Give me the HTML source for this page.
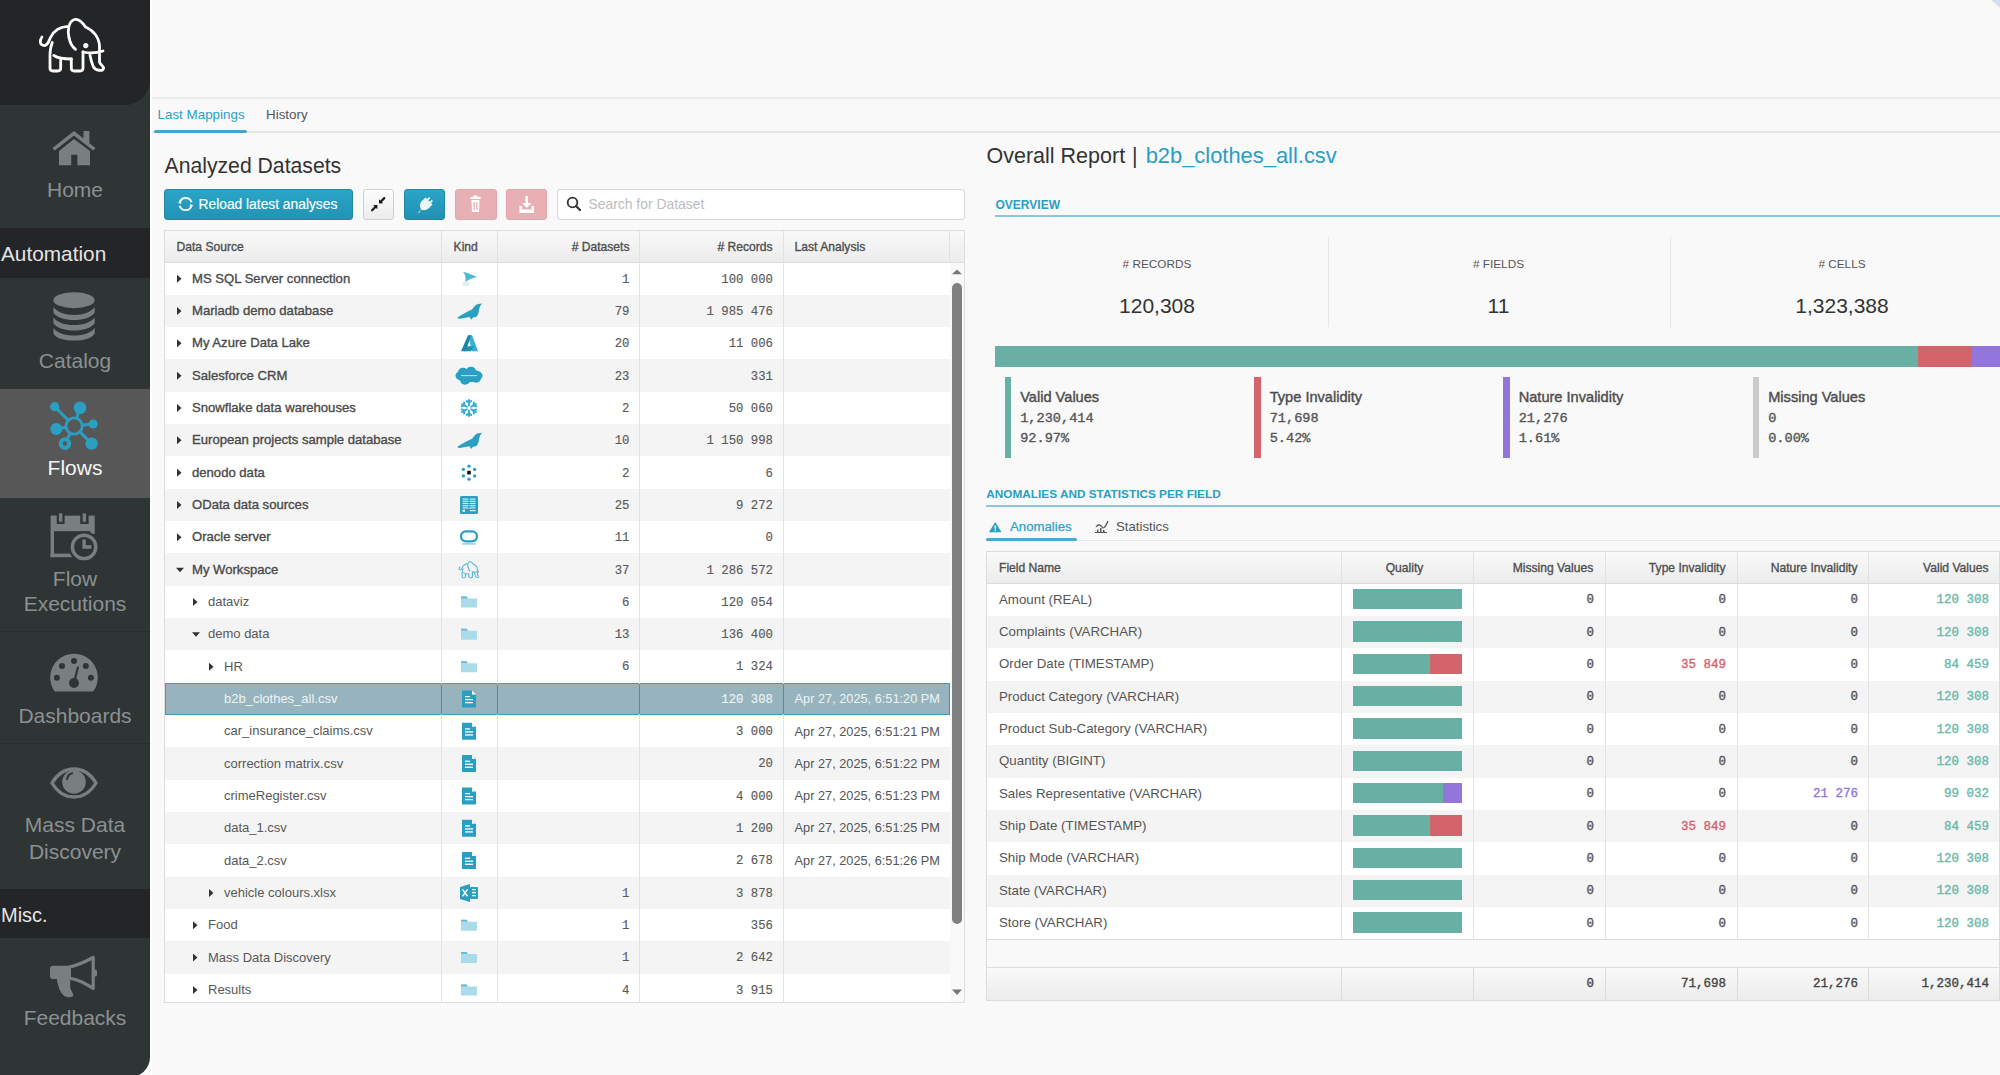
<!DOCTYPE html>
<html><head><meta charset="utf-8"><style>
*{box-sizing:border-box;margin:0;padding:0}
html,body{width:2000px;height:1075px;overflow:hidden;background:#f9f9f9;font-family:"Liberation Sans",sans-serif;color:#444}
.t{position:absolute;white-space:nowrap}
.m{font-family:"Liberation Mono",monospace;-webkit-text-stroke:0.35px currentColor}
svg{position:absolute;overflow:visible}
.box{position:absolute}
</style></head><body>
<div class="box" style="left:0.00px;top:0.00px;width:150.00px;height:1077.00px;background:#2f3535;border-bottom-right-radius:20px"></div>
<div class="box" style="left:0.00px;top:0.00px;width:150.00px;height:104.50px;background:#232526;border-bottom-right-radius:25px"></div>
<svg style="left:0px;top:0px" width="150" height="105" viewBox="0 0 150 105"><g fill="none" stroke="#fff" stroke-width="2.8" stroke-linecap="round" stroke-linejoin="round">
<path d="M42,37 C39,41 40,45.5 44.5,45.6 C47.5,45.5 48.5,42 50.5,37.5 C54,30 61,26.5 68.5,26.3"/>
<path d="M69,38 C67,30 69,21 74.5,19.5 C79,18.5 82.5,22.5 85.5,27 C93,30 99,37 99.5,46 L99.5,62 C100,65 104,66 103.5,68.5 C102.5,71.5 95,71 93,66 C91.5,62 90.5,58 90,55"/>
<path d="M69.2,38 C70,43 72.5,47 75.5,49.3"/>
<path d="M83,52 C90,53.5 97,53 103,51"/>
<path d="M83,52 L83,68.3 Q83,71 80,71 L74.3,71 Q71.3,71 71.3,68.3 L71.3,59"/>
<path d="M53.8,55.5 C57,57.5 62,59 71.3,59"/>
<path d="M52.3,42.5 C50.5,47 49.8,52 50,58 L50,68.3 Q50,71 53,71 L57.7,71 Q60.7,71 60.7,68.3 L60.7,59.5"/>
</g><circle cx="85.8" cy="45.6" r="2.6" fill="#fff"/></svg>
<svg style="left:0px;top:0px" width="150" height="200" viewBox="0 0 150 200"><g fill="#797e7f">
<path d="M74,131 L52.5,148 L54.8,150.5 L74,135.5 L93.2,150.5 L95.5,148 L89.4,143.2 L89.4,131 L83.5,131 L83.5,138.6 Z"/>
<path d="M74,139 L59,151 L59,165.3 L71.2,165.3 L71.2,154.8 L77.4,154.8 L77.4,165.3 L90,165.3 L90,151 Z"/>
</g></svg>
<div class="t" style="left:0.00px;width:150px;text-align:center;top:175.22px;font-size:21px;line-height:29px;color:#8b9091">Home</div>
<div class="box" style="left:0.00px;top:228.20px;width:150.00px;height:49.60px;background:#232526"></div>
<div class="t" style="left:1.00px;top:239.09px;font-size:20.8px;line-height:29px;color:#e4e4e4">Automation</div>
<svg style="left:0px;top:0px" width="150" height="400" viewBox="0 0 150 400"><g fill="#797e7f">
<ellipse cx="74" cy="300.2" rx="20.6" ry="8"/>
<path d="M53.4,307 C57,312 65,315 74,315 C83,315 91,312 94.7,307 L94.7,312.5 C91,318 83,320 74,320 C65,320 57,318 53.4,312.5 Z"/>
<path d="M53.4,317.5 C57,322.5 65,325 74,325 C83,325 91,322.5 94.7,317.5 L94.7,323 C91,328.5 83,330.5 74,330.5 C65,330.5 57,328.5 53.4,323 Z"/>
<path d="M53.4,328 C57,333 65,335.5 74,335.5 C83,335.5 91,333 94.7,328 L94.7,333.5 C91,339 83,340.5 74,340.5 C65,340.5 57,339 53.4,333.5 Z"/>
</g></svg>
<div class="t" style="left:0.00px;width:150px;text-align:center;top:345.52px;font-size:21px;line-height:29px;color:#8b9091">Catalog</div>
<div class="box" style="left:0.00px;top:388.50px;width:150.00px;height:109.30px;background:#575757"></div>
<svg style="left:0px;top:0px" width="150" height="500" viewBox="0 0 150 500"><g fill="#2a9fc1" stroke="#2a9fc1">
<g stroke-width="3"><line x1="54.7" y1="406.7" x2="74.1" y2="426"/><line x1="80" y1="407.8" x2="74.1" y2="426"/><line x1="56.3" y1="429" x2="74.1" y2="426"/><line x1="93.2" y1="424" x2="74.1" y2="426"/><line x1="65" y1="443.6" x2="74.1" y2="426"/><line x1="91.6" y1="443.6" x2="74.1" y2="426"/></g>
<circle cx="74.1" cy="426" r="8.1" fill="#575757" stroke-width="2.9"/>
<circle cx="54.7" cy="406.7" r="4.6" stroke="none"/>
<circle cx="80" cy="407.8" r="6.3" stroke="none"/>
<circle cx="56.3" cy="429" r="6" stroke="none"/>
<circle cx="93.2" cy="424" r="4.6" stroke="none"/>
<circle cx="65" cy="443.6" r="4.3" fill="#575757" stroke-width="4"/>
<circle cx="91.6" cy="443.6" r="6.15" stroke="none"/>
</g></svg>
<div class="t" style="left:0.00px;width:150px;text-align:center;top:453.22px;font-size:21px;line-height:29px;color:#f4f4f4">Flows</div>
<svg style="left:0px;top:0px" width="150" height="600" viewBox="0 0 150 600"><g fill="#797e7f">
<rect x="50.6" y="515.6" width="44.1" height="15.6"/>
<rect x="50.6" y="530" width="3.4" height="27.2"/>
<rect x="50.6" y="553.6" width="22" height="3.6"/>
<rect x="90.5" y="530" width="4.2" height="4"/>
</g>
<g fill="#2f3536"><rect x="56.7" y="515" width="7.9" height="9"/><rect x="80.2" y="515" width="8.4" height="9"/><circle cx="84.1" cy="546.9" r="15.6"/></g>
<g fill="#797e7f"><rect x="59" y="513.4" width="3.3" height="8.4"/><rect x="82.7" y="513.4" width="3.3" height="8.4"/></g>
<circle cx="84.1" cy="546.9" r="11.7" fill="none" stroke="#797e7f" stroke-width="3.4"/>
<path d="M84.1,539.6 L84.1,547 L91.4,547" fill="none" stroke="#797e7f" stroke-width="3.4"/></svg>
<div class="t" style="left:0.00px;width:150px;text-align:center;top:564.02px;font-size:21px;line-height:29px;color:#8b9091">Flow</div>
<div class="t" style="left:0.00px;width:150px;text-align:center;top:588.52px;font-size:21px;line-height:29px;color:#8b9091">Executions</div>
<div class="box" style="left:0.00px;top:631.00px;width:150.00px;height:1.00px;background:#282c2d"></div>
<svg style="left:0px;top:0px" width="150" height="700" viewBox="0 0 150 700"><path d="M54.8,691.6 A23.8,23.8 0 1 1 93.2,691.6 Z" fill="#797e7f"/>
<g fill="#2f3536"><circle cx="74" cy="660.9" r="3"/><circle cx="62" cy="666" r="3"/><circle cx="85.8" cy="666" r="3"/><circle cx="56.9" cy="677.8" r="3"/><circle cx="90.9" cy="677.8" r="3"/><circle cx="74" cy="683" r="5"/></g>
<line x1="74" y1="683" x2="77.9" y2="667.5" stroke="#2f3536" stroke-width="2.2" stroke-linecap="round"/></svg>
<div class="t" style="left:0.00px;width:150px;text-align:center;top:700.92px;font-size:21px;line-height:29px;color:#8b9091">Dashboards</div>
<div class="box" style="left:0.00px;top:742.50px;width:150.00px;height:1.00px;background:#282c2d"></div>
<svg style="left:0px;top:0px" width="150" height="820" viewBox="0 0 150 820"><path d="M52,783 C58,773 65,769 74,769 C83,769 90,773 96,783 C90,793 83,797 74,797 C65,797 58,793 52,783 Z" fill="none" stroke="#797e7f" stroke-width="3.3"/>
<circle cx="74" cy="782" r="11.8" fill="#797e7f"/>
<path d="M67,780 C67,776 69,774 73,773" fill="none" stroke="#2f3536" stroke-width="2"/></svg>
<div class="t" style="left:0.00px;width:150px;text-align:center;top:809.72px;font-size:21px;line-height:29px;color:#8b9091">Mass Data</div>
<div class="t" style="left:0.00px;width:150px;text-align:center;top:837.22px;font-size:21px;line-height:29px;color:#8b9091">Discovery</div>
<div class="box" style="left:0.00px;top:889.00px;width:150.00px;height:48.60px;background:#232526"></div>
<div class="t" style="left:1.00px;top:901.07px;font-size:20px;line-height:28px;color:#e4e4e4">Misc.</div>
<svg style="left:0px;top:0px" width="150" height="1010" viewBox="0 0 150 1010"><g fill="#797e7f">
<rect x="50" y="965.7" width="21" height="13.3" rx="3"/>
<path d="M56.8,979 L70.2,979 L70.2,988 L73.5,995 C73,997 70,997.5 67,997 C62,996 58.5,990 56.8,979 Z"/>
<rect x="93.5" y="969.6" width="3.5" height="7" rx="1.5"/>
</g>
<path d="M68,967.2 C80,965 86,961 93.2,957.5 L93.2,988.5 C86,984 80,980 68,977.8" fill="none" stroke="#797e7f" stroke-width="3.2" stroke-linejoin="round"/></svg>
<div class="t" style="left:0.00px;width:150px;text-align:center;top:1003.42px;font-size:21px;line-height:29px;color:#8b9091">Feedbacks</div>
<div class="box" style="left:1985px;top:-53px;width:66px;height:66px;border-radius:50%;background:#d3deed"></div>
<div class="box" style="left:150.00px;top:0.00px;width:2.00px;height:1075.00px;background:#fff"></div>
<div class="box" style="left:152.00px;top:97.00px;width:1848.00px;height:2.00px;background:#ebebeb"></div>
<div class="box" style="left:152.00px;top:131.00px;width:1848.00px;height:1.50px;background:#e6e6e6"></div>
<div class="box" style="left:154.00px;top:129.80px;width:93.00px;height:3.00px;background:#3fa9c9;border-radius:1.5px"></div>
<div class="t" style="left:157.50px;top:104.66px;font-size:13.4px;line-height:19px;color:#2a9fc1">Last Mappings</div>
<div class="t" style="left:266.00px;top:104.66px;font-size:13.4px;line-height:19px;color:#555">History</div>
<div class="t" style="left:164.50px;top:151.15px;font-size:21.2px;line-height:30px;color:#333">Analyzed Datasets</div>
<div class="box" style="left:164.00px;top:188.50px;width:189.00px;height:31.30px;background:linear-gradient(#2aa5c6,#2293b4);border-radius:3px;border:1px solid #2189a8"></div>
<svg style="left:0px;top:0px" width="400" height="230" viewBox="0 0 400 230"><g fill="none" stroke="#f2fafc" stroke-width="1.9"><path d="M179.6,202.4 A6.3,6.3 0 0 1 191.6,202.3"/><path d="M191.6,205.7 A6.3,6.3 0 0 1 179.6,205.8"/></g>
<path d="M177.6,202.8 L181.6,201.2 L181,204 Z" fill="#f2fafc"/><path d="M193.6,205.3 L189.6,206.9 L190.2,204.1 Z" fill="#f2fafc"/></svg>
<div class="t" style="left:198.50px;top:194.72px;font-size:13.8px;line-height:19px;color:#fff;-webkit-text-stroke:0.15px #fff">Reload latest analyses</div>
<div class="box" style="left:363.00px;top:188.80px;width:31.00px;height:30.80px;background:linear-gradient(#fdfdfd,#ececec);border:1px solid #cfcfcf;border-radius:3px"></div>
<svg style="left:0px;top:0px" width="420" height="230" viewBox="0 0 420 230"><path d="M377.49,204.91 L377.28,209.22 L373.18,205.12 Z" fill="#1a1a1a"/><line x1="375.73" y1="206.67" x2="372.12" y2="210.28" stroke="#1a1a1a" stroke-width="2.2" stroke-linecap="round"/><path d="M378.91,203.49 L383.22,203.28 L379.12,199.18 Z" fill="#1a1a1a"/><line x1="380.67" y1="201.73" x2="384.28" y2="198.12" stroke="#1a1a1a" stroke-width="2.2" stroke-linecap="round"/></svg>
<div class="box" style="left:403.70px;top:188.80px;width:41.50px;height:30.80px;background:linear-gradient(#2aa5c6,#2191b2);border:1px solid #2189a8;border-radius:3px"></div>
<svg style="left:0px;top:0px" width="460" height="230" viewBox="0 0 460 230"><path d="M418,213 L421,209 C419,206 420,202 423,200 L425.5,197.5 L427,199 L429,197 L430.3,198.3 L428.3,200.3 L429.7,201.7 L431.7,199.7 L433,201 L431,203 L432.5,204.5 L430,207 C428,210 424,211 421,209.5 L419,213 Z" fill="#e8f6fa"/></svg>
<div class="box" style="left:455.00px;top:188.80px;width:41.50px;height:30.80px;background:#e8b0b5;border-radius:3px;border:1px solid #e2a7ad"></div>
<svg style="left:0px;top:0px" width="520" height="230" viewBox="0 0 520 230"><g fill="#fff"><rect x="470.5" y="197" width="10" height="2"/><rect x="473.5" y="195.5" width="4" height="2"/>
<path d="M471.5,200 L479.5,200 L479,212 L472,212 Z"/></g><g fill="#e8b0b5"><rect x="473.5" y="202" width="1.3" height="8"/><rect x="476.2" y="202" width="1.3" height="8"/></g></svg>
<div class="box" style="left:506.30px;top:188.80px;width:41.10px;height:30.80px;background:#e8b0b5;border-radius:3px;border:1px solid #e2a7ad"></div>
<svg style="left:0px;top:0px" width="560" height="230" viewBox="0 0 560 230"><g fill="#fff"><rect x="525.5" y="196" width="2.4" height="8"/><path d="M522,203 L531.5,203 L526.7,208 Z"/>
<path d="M519.5,206 L522,206 L522,209.5 L531.5,209.5 L531.5,206 L534,206 L534,213 L519.5,213 Z"/></g></svg>
<div class="box" style="left:557.30px;top:188.50px;width:408.20px;height:31.50px;background:#fff;border:1px solid #d6d6d6;border-radius:3px"></div>
<svg style="left:0px;top:0px" width="600" height="230" viewBox="0 0 600 230"><circle cx="572.5" cy="202.5" r="4.8" fill="none" stroke="#333" stroke-width="1.8"/><line x1="576" y1="206" x2="580" y2="210" stroke="#333" stroke-width="2.2" stroke-linecap="round"/></svg>
<div class="t" style="left:588.50px;top:194.68px;font-size:13.9px;line-height:19px;color:#bdbdbd">Search for Dataset</div>
<div class="box" style="left:164.30px;top:229.50px;width:801.00px;height:773.30px;background:#f9f9f9;border:1px solid #dddddd;overflow:hidden"></div>
<div class="box" style="left:165.30px;top:230.50px;width:799.00px;height:32.00px;background:linear-gradient(#f9f9f9,#ececec);border-bottom:1px solid #dcdcdc"></div>
<div class="box" style="left:165.30px;top:262.50px;width:784.50px;height:32.33px;background:#ffffff"></div>
<div class="t" style="left:192.00px;top:269.76px;font-size:13.1px;line-height:18px;color:#4a4a4a;-webkit-text-stroke:0.35px #4a4a4a;">MS SQL Server connection</div>
<div class="t m" style="right:1370.50px;text-align:right;top:271.53px;font-size:12.3px;line-height:17px;color:#5a5a5a;-webkit-text-stroke:0.15px #5a5a5a">1</div>
<div class="t m" style="right:1227.00px;text-align:right;top:271.53px;font-size:12.3px;line-height:17px;color:#5a5a5a;-webkit-text-stroke:0.15px #5a5a5a">100 000</div>
<div class="box" style="left:165.30px;top:294.83px;width:784.50px;height:32.33px;background:#f4f4f4"></div>
<div class="t" style="left:192.00px;top:302.09px;font-size:13.1px;line-height:18px;color:#4a4a4a;-webkit-text-stroke:0.35px #4a4a4a;">Mariadb demo database</div>
<div class="t m" style="right:1370.50px;text-align:right;top:303.86px;font-size:12.3px;line-height:17px;color:#5a5a5a;-webkit-text-stroke:0.15px #5a5a5a">79</div>
<div class="t m" style="right:1227.00px;text-align:right;top:303.86px;font-size:12.3px;line-height:17px;color:#5a5a5a;-webkit-text-stroke:0.15px #5a5a5a">1 985 476</div>
<div class="box" style="left:165.30px;top:327.16px;width:784.50px;height:32.33px;background:#ffffff"></div>
<div class="t" style="left:192.00px;top:334.42px;font-size:13.1px;line-height:18px;color:#4a4a4a;-webkit-text-stroke:0.35px #4a4a4a;">My Azure Data Lake</div>
<div class="t m" style="right:1370.50px;text-align:right;top:336.19px;font-size:12.3px;line-height:17px;color:#5a5a5a;-webkit-text-stroke:0.15px #5a5a5a">20</div>
<div class="t m" style="right:1227.00px;text-align:right;top:336.19px;font-size:12.3px;line-height:17px;color:#5a5a5a;-webkit-text-stroke:0.15px #5a5a5a">11 006</div>
<div class="box" style="left:165.30px;top:359.49px;width:784.50px;height:32.33px;background:#f4f4f4"></div>
<div class="t" style="left:192.00px;top:366.75px;font-size:13.1px;line-height:18px;color:#4a4a4a;-webkit-text-stroke:0.35px #4a4a4a;">Salesforce CRM</div>
<div class="t m" style="right:1370.50px;text-align:right;top:368.52px;font-size:12.3px;line-height:17px;color:#5a5a5a;-webkit-text-stroke:0.15px #5a5a5a">23</div>
<div class="t m" style="right:1227.00px;text-align:right;top:368.52px;font-size:12.3px;line-height:17px;color:#5a5a5a;-webkit-text-stroke:0.15px #5a5a5a">331</div>
<div class="box" style="left:165.30px;top:391.82px;width:784.50px;height:32.33px;background:#ffffff"></div>
<div class="t" style="left:192.00px;top:399.08px;font-size:13.1px;line-height:18px;color:#4a4a4a;-webkit-text-stroke:0.35px #4a4a4a;">Snowflake data warehouses</div>
<div class="t m" style="right:1370.50px;text-align:right;top:400.85px;font-size:12.3px;line-height:17px;color:#5a5a5a;-webkit-text-stroke:0.15px #5a5a5a">2</div>
<div class="t m" style="right:1227.00px;text-align:right;top:400.85px;font-size:12.3px;line-height:17px;color:#5a5a5a;-webkit-text-stroke:0.15px #5a5a5a">50 060</div>
<div class="box" style="left:165.30px;top:424.15px;width:784.50px;height:32.33px;background:#f4f4f4"></div>
<div class="t" style="left:192.00px;top:431.41px;font-size:13.1px;line-height:18px;color:#4a4a4a;-webkit-text-stroke:0.35px #4a4a4a;">European projects sample database</div>
<div class="t m" style="right:1370.50px;text-align:right;top:433.18px;font-size:12.3px;line-height:17px;color:#5a5a5a;-webkit-text-stroke:0.15px #5a5a5a">10</div>
<div class="t m" style="right:1227.00px;text-align:right;top:433.18px;font-size:12.3px;line-height:17px;color:#5a5a5a;-webkit-text-stroke:0.15px #5a5a5a">1 150 998</div>
<div class="box" style="left:165.30px;top:456.48px;width:784.50px;height:32.33px;background:#ffffff"></div>
<div class="t" style="left:192.00px;top:463.74px;font-size:13.1px;line-height:18px;color:#4a4a4a;-webkit-text-stroke:0.35px #4a4a4a;">denodo data</div>
<div class="t m" style="right:1370.50px;text-align:right;top:465.51px;font-size:12.3px;line-height:17px;color:#5a5a5a;-webkit-text-stroke:0.15px #5a5a5a">2</div>
<div class="t m" style="right:1227.00px;text-align:right;top:465.51px;font-size:12.3px;line-height:17px;color:#5a5a5a;-webkit-text-stroke:0.15px #5a5a5a">6</div>
<div class="box" style="left:165.30px;top:488.81px;width:784.50px;height:32.33px;background:#f4f4f4"></div>
<div class="t" style="left:192.00px;top:496.07px;font-size:13.1px;line-height:18px;color:#4a4a4a;-webkit-text-stroke:0.35px #4a4a4a;">OData data sources</div>
<div class="t m" style="right:1370.50px;text-align:right;top:497.84px;font-size:12.3px;line-height:17px;color:#5a5a5a;-webkit-text-stroke:0.15px #5a5a5a">25</div>
<div class="t m" style="right:1227.00px;text-align:right;top:497.84px;font-size:12.3px;line-height:17px;color:#5a5a5a;-webkit-text-stroke:0.15px #5a5a5a">9 272</div>
<div class="box" style="left:165.30px;top:521.14px;width:784.50px;height:32.33px;background:#ffffff"></div>
<div class="t" style="left:192.00px;top:528.40px;font-size:13.1px;line-height:18px;color:#4a4a4a;-webkit-text-stroke:0.35px #4a4a4a;">Oracle server</div>
<div class="t m" style="right:1370.50px;text-align:right;top:530.17px;font-size:12.3px;line-height:17px;color:#5a5a5a;-webkit-text-stroke:0.15px #5a5a5a">11</div>
<div class="t m" style="right:1227.00px;text-align:right;top:530.17px;font-size:12.3px;line-height:17px;color:#5a5a5a;-webkit-text-stroke:0.15px #5a5a5a">0</div>
<div class="box" style="left:165.30px;top:553.47px;width:784.50px;height:32.33px;background:#f4f4f4"></div>
<div class="t" style="left:192.00px;top:560.73px;font-size:13.1px;line-height:18px;color:#4a4a4a;-webkit-text-stroke:0.35px #4a4a4a;">My Workspace</div>
<div class="t m" style="right:1370.50px;text-align:right;top:562.50px;font-size:12.3px;line-height:17px;color:#5a5a5a;-webkit-text-stroke:0.15px #5a5a5a">37</div>
<div class="t m" style="right:1227.00px;text-align:right;top:562.50px;font-size:12.3px;line-height:17px;color:#5a5a5a;-webkit-text-stroke:0.15px #5a5a5a">1 286 572</div>
<div class="box" style="left:165.30px;top:585.80px;width:784.50px;height:32.33px;background:#ffffff"></div>
<div class="t" style="left:208.00px;top:593.10px;font-size:13px;line-height:18px;color:#585858;">dataviz</div>
<div class="t m" style="right:1370.50px;text-align:right;top:594.83px;font-size:12.3px;line-height:17px;color:#5a5a5a;-webkit-text-stroke:0.15px #5a5a5a">6</div>
<div class="t m" style="right:1227.00px;text-align:right;top:594.83px;font-size:12.3px;line-height:17px;color:#5a5a5a;-webkit-text-stroke:0.15px #5a5a5a">120 054</div>
<div class="box" style="left:165.30px;top:618.13px;width:784.50px;height:32.33px;background:#f4f4f4"></div>
<div class="t" style="left:208.00px;top:625.43px;font-size:13px;line-height:18px;color:#585858;">demo data</div>
<div class="t m" style="right:1370.50px;text-align:right;top:627.16px;font-size:12.3px;line-height:17px;color:#5a5a5a;-webkit-text-stroke:0.15px #5a5a5a">13</div>
<div class="t m" style="right:1227.00px;text-align:right;top:627.16px;font-size:12.3px;line-height:17px;color:#5a5a5a;-webkit-text-stroke:0.15px #5a5a5a">136 400</div>
<div class="box" style="left:165.30px;top:650.46px;width:784.50px;height:32.33px;background:#ffffff"></div>
<div class="t" style="left:224.00px;top:657.76px;font-size:13px;line-height:18px;color:#585858;">HR</div>
<div class="t m" style="right:1370.50px;text-align:right;top:659.49px;font-size:12.3px;line-height:17px;color:#5a5a5a;-webkit-text-stroke:0.15px #5a5a5a">6</div>
<div class="t m" style="right:1227.00px;text-align:right;top:659.49px;font-size:12.3px;line-height:17px;color:#5a5a5a;-webkit-text-stroke:0.15px #5a5a5a">1 324</div>
<div class="box" style="left:165.30px;top:682.79px;width:784.70px;height:32.33px;background:#97b4be;border:1.5px solid #3d9dbd"></div>
<div class="t" style="left:224.00px;top:690.09px;font-size:13px;line-height:18px;color:#eef3f5;">b2b_clothes_all.csv</div>
<div class="t m" style="right:1227.00px;text-align:right;top:691.82px;font-size:12.3px;line-height:17px;color:#eef3f5;-webkit-text-stroke:0.15px #eef3f5">120 308</div>
<div class="t" style="left:794.60px;top:690.17px;font-size:12.75px;line-height:18px;color:#eef3f5">Apr 27, 2025, 6:51:20 PM</div>
<div class="box" style="left:165.30px;top:715.12px;width:784.50px;height:32.33px;background:#ffffff"></div>
<div class="t" style="left:224.00px;top:722.42px;font-size:13px;line-height:18px;color:#585858;">car_insurance_claims.csv</div>
<div class="t m" style="right:1227.00px;text-align:right;top:724.15px;font-size:12.3px;line-height:17px;color:#5a5a5a;-webkit-text-stroke:0.15px #5a5a5a">3 000</div>
<div class="t" style="left:794.60px;top:722.50px;font-size:12.75px;line-height:18px;color:#555">Apr 27, 2025, 6:51:21 PM</div>
<div class="box" style="left:165.30px;top:747.45px;width:784.50px;height:32.33px;background:#f4f4f4"></div>
<div class="t" style="left:224.00px;top:754.75px;font-size:13px;line-height:18px;color:#585858;">correction matrix.csv</div>
<div class="t m" style="right:1227.00px;text-align:right;top:756.48px;font-size:12.3px;line-height:17px;color:#5a5a5a;-webkit-text-stroke:0.15px #5a5a5a">20</div>
<div class="t" style="left:794.60px;top:754.83px;font-size:12.75px;line-height:18px;color:#555">Apr 27, 2025, 6:51:22 PM</div>
<div class="box" style="left:165.30px;top:779.78px;width:784.50px;height:32.33px;background:#ffffff"></div>
<div class="t" style="left:224.00px;top:787.08px;font-size:13px;line-height:18px;color:#585858;">crimeRegister.csv</div>
<div class="t m" style="right:1227.00px;text-align:right;top:788.81px;font-size:12.3px;line-height:17px;color:#5a5a5a;-webkit-text-stroke:0.15px #5a5a5a">4 000</div>
<div class="t" style="left:794.60px;top:787.16px;font-size:12.75px;line-height:18px;color:#555">Apr 27, 2025, 6:51:23 PM</div>
<div class="box" style="left:165.30px;top:812.11px;width:784.50px;height:32.33px;background:#f4f4f4"></div>
<div class="t" style="left:224.00px;top:819.41px;font-size:13px;line-height:18px;color:#585858;">data_1.csv</div>
<div class="t m" style="right:1227.00px;text-align:right;top:821.14px;font-size:12.3px;line-height:17px;color:#5a5a5a;-webkit-text-stroke:0.15px #5a5a5a">1 200</div>
<div class="t" style="left:794.60px;top:819.49px;font-size:12.75px;line-height:18px;color:#555">Apr 27, 2025, 6:51:25 PM</div>
<div class="box" style="left:165.30px;top:844.44px;width:784.50px;height:32.33px;background:#ffffff"></div>
<div class="t" style="left:224.00px;top:851.74px;font-size:13px;line-height:18px;color:#585858;">data_2.csv</div>
<div class="t m" style="right:1227.00px;text-align:right;top:853.47px;font-size:12.3px;line-height:17px;color:#5a5a5a;-webkit-text-stroke:0.15px #5a5a5a">2 678</div>
<div class="t" style="left:794.60px;top:851.82px;font-size:12.75px;line-height:18px;color:#555">Apr 27, 2025, 6:51:26 PM</div>
<div class="box" style="left:165.30px;top:876.77px;width:784.50px;height:32.33px;background:#f4f4f4"></div>
<div class="t" style="left:224.00px;top:884.07px;font-size:13px;line-height:18px;color:#585858;">vehicle colours.xlsx</div>
<div class="t m" style="right:1370.50px;text-align:right;top:885.80px;font-size:12.3px;line-height:17px;color:#5a5a5a;-webkit-text-stroke:0.15px #5a5a5a">1</div>
<div class="t m" style="right:1227.00px;text-align:right;top:885.80px;font-size:12.3px;line-height:17px;color:#5a5a5a;-webkit-text-stroke:0.15px #5a5a5a">3 878</div>
<div class="box" style="left:165.30px;top:909.10px;width:784.50px;height:32.33px;background:#ffffff"></div>
<div class="t" style="left:208.00px;top:916.40px;font-size:13px;line-height:18px;color:#585858;">Food</div>
<div class="t m" style="right:1370.50px;text-align:right;top:918.13px;font-size:12.3px;line-height:17px;color:#5a5a5a;-webkit-text-stroke:0.15px #5a5a5a">1</div>
<div class="t m" style="right:1227.00px;text-align:right;top:918.13px;font-size:12.3px;line-height:17px;color:#5a5a5a;-webkit-text-stroke:0.15px #5a5a5a">356</div>
<div class="box" style="left:165.30px;top:941.43px;width:784.50px;height:32.33px;background:#f4f4f4"></div>
<div class="t" style="left:208.00px;top:948.73px;font-size:13px;line-height:18px;color:#585858;">Mass Data Discovery</div>
<div class="t m" style="right:1370.50px;text-align:right;top:950.46px;font-size:12.3px;line-height:17px;color:#5a5a5a;-webkit-text-stroke:0.15px #5a5a5a">1</div>
<div class="t m" style="right:1227.00px;text-align:right;top:950.46px;font-size:12.3px;line-height:17px;color:#5a5a5a;-webkit-text-stroke:0.15px #5a5a5a">2 642</div>
<div class="box" style="left:165.30px;top:973.76px;width:784.50px;height:28.04px;background:#ffffff"></div>
<div class="t" style="left:208.00px;top:981.06px;font-size:13px;line-height:18px;color:#585858;">Results</div>
<div class="t m" style="right:1370.50px;text-align:right;top:982.79px;font-size:12.3px;line-height:17px;color:#5a5a5a;-webkit-text-stroke:0.15px #5a5a5a">4</div>
<div class="t m" style="right:1227.00px;text-align:right;top:982.79px;font-size:12.3px;line-height:17px;color:#5a5a5a;-webkit-text-stroke:0.15px #5a5a5a">3 915</div>
<div class="box" style="left:441.30px;top:230.50px;width:1.00px;height:771.30px;background:#e2e2e2"></div>
<div class="box" style="left:441.30px;top:683.79px;width:1.00px;height:30.33px;background:#4f8fa5"></div>
<div class="box" style="left:496.90px;top:230.50px;width:1.00px;height:771.30px;background:#e2e2e2"></div>
<div class="box" style="left:496.90px;top:683.79px;width:1.00px;height:30.33px;background:#4f8fa5"></div>
<div class="box" style="left:638.90px;top:230.50px;width:1.00px;height:771.30px;background:#e2e2e2"></div>
<div class="box" style="left:638.90px;top:683.79px;width:1.00px;height:30.33px;background:#4f8fa5"></div>
<div class="box" style="left:782.60px;top:230.50px;width:1.00px;height:771.30px;background:#e2e2e2"></div>
<div class="box" style="left:782.60px;top:683.79px;width:1.00px;height:30.33px;background:#4f8fa5"></div>
<div class="box" style="left:949.30px;top:230.50px;width:1.00px;height:32.00px;background:#e2e2e2"></div>
<div class="box" style="left:949.30px;top:683.79px;width:1.00px;height:30.33px;background:#4f8fa5"></div>
<div class="t" style="left:176.50px;top:239.01px;font-size:12.1px;line-height:17px;color:#4f4f4f;-webkit-text-stroke:0.35px #4f4f4f">Data Source</div>
<div class="t" style="left:453.60px;top:239.01px;font-size:12.1px;line-height:17px;color:#4f4f4f;-webkit-text-stroke:0.35px #4f4f4f">Kind</div>
<div class="t" style="right:1370.50px;text-align:right;top:239.01px;font-size:12.1px;line-height:17px;color:#4f4f4f;-webkit-text-stroke:0.35px #4f4f4f"># Datasets</div>
<div class="t" style="right:1227.50px;text-align:right;top:239.01px;font-size:12.1px;line-height:17px;color:#4f4f4f;-webkit-text-stroke:0.35px #4f4f4f"># Records</div>
<div class="t" style="left:794.60px;top:239.01px;font-size:12.1px;line-height:17px;color:#4f4f4f;-webkit-text-stroke:0.35px #4f4f4f">Last Analysis</div>
<svg style="left:0px;top:0px" width="1000" height="1075" viewBox="0 0 1000 1075"><path d="M177.0,274.665 L181.5,278.665 L177.0,282.665 Z" fill="#333"/><path d="M463,271.665 C467,272.665 473,274.665 477,277.165 C473,277.665 469,278.665 465,282.665 C466,278.665 466,275.665 463,271.665 Z" fill="#4fb6d3"/><ellipse cx="466" cy="283.665" rx="3.5" ry="2.5" fill="#dfeef3"/><path d="M177.0,306.995 L181.5,310.995 L177.0,314.995 Z" fill="#333"/><path d="M457.5,317.495 C462,313.995 467,311.995 472,309.495 C474,306.995 475.5,304.495 478,303.995 L482,303.495 C480.5,304.995 479.5,306.995 479,309.995 C478.5,313.995 477.5,315.995 476,316.995 L473,317.495 L471,319.795 L469.5,316.995 C466,317.495 462,318.495 458.5,318.795 Z" fill="#2a9fc1"/><path d="M177.0,339.325 L181.5,343.325 L177.0,347.325 Z" fill="#333"/><path d="M468,335.325 L472,335.325 L478,351.325 L472,351.325 Z" fill="#38b0d6"/><path d="M468,335.325 L471,335.325 L466,351.325 L461,351.325 Z" fill="#1a84a8"/><path d="M468,346.325 L474,346.325 L471,351.325 L464,351.325 Z" fill="#1f90b5"/><path d="M177.0,371.65500000000003 L181.5,375.65500000000003 L177.0,379.65500000000003 Z" fill="#333"/><g fill="#2a9fc1"><ellipse cx="469" cy="375.65500000000003" rx="13.5" ry="6.5"/><circle cx="463" cy="372.65500000000003" r="5"/><circle cx="471" cy="371.65500000000003" r="5"/><circle cx="476" cy="377.65500000000003" r="5"/><circle cx="465" cy="379.65500000000003" r="5"/></g><rect x="461" y="375.15500000000003" width="16" height="1" fill="#bfe4ef"/><path d="M177.0,403.985 L181.5,407.985 L177.0,411.985 Z" fill="#333"/><g stroke="#35abcd" stroke-width="1.9" stroke-linecap="round"><line x1="471.17" y1="409.24" x2="475.93" y2="411.99"/><line x1="473.50" y1="410.59" x2="476.29" y2="409.48"/><line x1="473.50" y1="410.59" x2="473.94" y2="413.55"/><line x1="469.00" y1="410.49" x2="469.00" y2="415.99"/><line x1="469.00" y1="413.19" x2="471.35" y2="415.05"/><line x1="469.00" y1="413.19" x2="466.65" y2="415.05"/><line x1="466.83" y1="409.24" x2="462.07" y2="411.99"/><line x1="464.50" y1="410.59" x2="464.06" y2="413.55"/><line x1="464.50" y1="410.59" x2="461.71" y2="409.48"/><line x1="466.83" y1="406.74" x2="462.07" y2="403.99"/><line x1="464.50" y1="405.38" x2="461.71" y2="406.49"/><line x1="464.50" y1="405.38" x2="464.06" y2="402.42"/><line x1="469.00" y1="405.49" x2="469.00" y2="399.99"/><line x1="469.00" y1="402.79" x2="466.65" y2="400.92"/><line x1="469.00" y1="402.79" x2="471.35" y2="400.92"/><line x1="471.17" y1="406.74" x2="475.93" y2="403.99"/><line x1="473.50" y1="405.38" x2="473.94" y2="402.42"/><line x1="473.50" y1="405.38" x2="476.29" y2="406.49"/></g><path d="M177.0,436.315 L181.5,440.315 L177.0,444.315 Z" fill="#333"/><path d="M457.5,446.815 C462,443.315 467,441.315 472,438.815 C474,436.315 475.5,433.815 478,433.315 L482,432.815 C480.5,434.315 479.5,436.315 479,439.315 C478.5,443.315 477.5,445.315 476,446.315 L473,446.815 L471,449.115 L469.5,446.315 C466,446.815 462,447.815 458.5,448.115 Z" fill="#2a9fc1"/><path d="M177.0,468.64500000000004 L181.5,472.64500000000004 L177.0,476.64500000000004 Z" fill="#333"/><g fill="#2a9fc1"><circle cx="469.00" cy="479.14" r="1.7"/><circle cx="463.37" cy="475.90" r="1.7"/><circle cx="463.37" cy="469.40" r="1.7"/><circle cx="469.00" cy="466.15" r="1.7"/><circle cx="474.63" cy="469.39" r="1.7"/><circle cx="474.63" cy="475.89" r="1.7"/></g><rect x="467.2" y="470.845" width="3.6" height="3.6" fill="#111"/><path d="M177.0,500.975 L181.5,504.975 L177.0,508.975 Z" fill="#333"/><rect x="460" y="495.975" width="18" height="18" rx="1.5" fill="#2a9fc1"/><g fill="#cdeaf3"><rect x="462.5" y="498.5" width="13" height="1.2"/><rect x="462.5" y="500.7" width="13" height="1.2"/><rect x="462.5" y="502.9" width="13" height="1.2"/><rect x="462.5" y="505.1" width="13" height="1.2"/><rect x="462.5" y="507.3" width="13" height="1.2"/><rect x="462.5" y="509.475" width="2.5" height="2.5"/><rect x="469.8" y="509.975" width="6" height="1.3"/></g><rect x="468.4" y="497.975" width="1.2" height="10" fill="#2a9fc1"/><path d="M177.0,533.305 L181.5,537.305 L177.0,541.305 Z" fill="#333"/><rect x="461" y="531.305" width="16" height="10" rx="5" fill="none" stroke="#2a9fc1" stroke-width="2.3"/><rect x="462" y="543.305" width="14" height="1.2" fill="#7cc6dc"/><path d="M176.0,567.635 L184.0,567.635 L180.0,572.135 Z" fill="#333"/><g transform="translate(446.68,555.68) scale(0.31)" fill="none" stroke="#5cb8d4" stroke-width="3.6" stroke-linecap="round" stroke-linejoin="round">
<path d="M42,37 C39,41 40,45.5 44.5,45.6 C47.5,45.5 48.5,42 50.5,37.5 C54,30 61,26.5 68.5,26.3"/>
<path d="M69,38 C67,30 69,21 74.5,19.5 C79,18.5 82.5,22.5 85.5,27 C93,30 99,37 99.5,46 L99.5,62 C100,65 104,66 103.5,68.5 C102.5,71.5 95,71 93,66 C91.5,62 90.5,58 90,55"/>
<path d="M69.2,38 C70,43 72.5,47 75.5,49.3"/>
<path d="M83,52 C90,53.5 97,53 103,51"/>
<path d="M83,52 L83,68.3 Q83,71 80,71 L74.3,71 Q71.3,71 71.3,68.3 L71.3,59"/>
<path d="M53.8,55.5 C57,57.5 62,59 71.3,59"/>
<path d="M52.3,42.5 C50.5,47 49.8,52 50,58 L50,68.3 Q50,71 53,71 L57.7,71 Q60.7,71 60.7,68.3 L60.7,59.5"/>
</g><path d="M193.0,597.9649999999999 L197.5,601.9649999999999 L193.0,605.9649999999999 Z" fill="#333"/><path d="M461,596.4649999999999 L466.5,596.4649999999999 L468,598.4649999999999 L477,598.4649999999999 L477,607.4649999999999 L461,607.4649999999999 Z" fill="#aadbe9"/><path d="M461,596.4649999999999 L466.5,596.4649999999999 L468,598.165 L461,598.165 Z" fill="#62b9d4"/><path d="M192.0,632.295 L200.0,632.295 L196.0,636.795 Z" fill="#333"/><path d="M461,628.795 L466.5,628.795 L468,630.795 L477,630.795 L477,639.795 L461,639.795 Z" fill="#aadbe9"/><path d="M461,628.795 L466.5,628.795 L468,630.495 L461,630.495 Z" fill="#62b9d4"/><path d="M209.0,662.625 L213.5,666.625 L209.0,670.625 Z" fill="#333"/><path d="M461,661.125 L466.5,661.125 L468,663.125 L477,663.125 L477,672.125 L461,672.125 Z" fill="#aadbe9"/><path d="M461,661.125 L466.5,661.125 L468,662.825 L461,662.825 Z" fill="#62b9d4"/><path d="M462,690.4549999999999 L472,690.4549999999999 L476,694.4549999999999 L476,707.4549999999999 L462,707.4549999999999 Z" fill="#2a9fc1"/><path d="M472,690.4549999999999 L472,694.4549999999999 L476,694.4549999999999 Z" fill="#fff"/><rect x="465" y="698.9549999999999" width="8" height="1.3" fill="#fff"/><rect x="465" y="701.9549999999999" width="8" height="1.3" fill="#fff"/><rect x="465" y="695.9549999999999" width="5" height="1.3" fill="#fff"/><path d="M462,722.785 L472,722.785 L476,726.785 L476,739.785 L462,739.785 Z" fill="#2a9fc1"/><path d="M472,722.785 L472,726.785 L476,726.785 Z" fill="#fff"/><rect x="465" y="731.285" width="8" height="1.3" fill="#fff"/><rect x="465" y="734.285" width="8" height="1.3" fill="#fff"/><rect x="465" y="728.285" width="5" height="1.3" fill="#fff"/><path d="M462,755.115 L472,755.115 L476,759.115 L476,772.115 L462,772.115 Z" fill="#2a9fc1"/><path d="M472,755.115 L472,759.115 L476,759.115 Z" fill="#fff"/><rect x="465" y="763.615" width="8" height="1.3" fill="#fff"/><rect x="465" y="766.615" width="8" height="1.3" fill="#fff"/><rect x="465" y="760.615" width="5" height="1.3" fill="#fff"/><path d="M462,787.4449999999999 L472,787.4449999999999 L476,791.4449999999999 L476,804.4449999999999 L462,804.4449999999999 Z" fill="#2a9fc1"/><path d="M472,787.4449999999999 L472,791.4449999999999 L476,791.4449999999999 Z" fill="#fff"/><rect x="465" y="795.9449999999999" width="8" height="1.3" fill="#fff"/><rect x="465" y="798.9449999999999" width="8" height="1.3" fill="#fff"/><rect x="465" y="792.9449999999999" width="5" height="1.3" fill="#fff"/><path d="M462,819.775 L472,819.775 L476,823.775 L476,836.775 L462,836.775 Z" fill="#2a9fc1"/><path d="M472,819.775 L472,823.775 L476,823.775 Z" fill="#fff"/><rect x="465" y="828.275" width="8" height="1.3" fill="#fff"/><rect x="465" y="831.275" width="8" height="1.3" fill="#fff"/><rect x="465" y="825.275" width="5" height="1.3" fill="#fff"/><path d="M462,852.1049999999999 L472,852.1049999999999 L476,856.1049999999999 L476,869.1049999999999 L462,869.1049999999999 Z" fill="#2a9fc1"/><path d="M472,852.1049999999999 L472,856.1049999999999 L476,856.1049999999999 Z" fill="#fff"/><rect x="465" y="860.6049999999999" width="8" height="1.3" fill="#fff"/><rect x="465" y="863.6049999999999" width="8" height="1.3" fill="#fff"/><rect x="465" y="857.6049999999999" width="5" height="1.3" fill="#fff"/><path d="M209.0,888.935 L213.5,892.935 L209.0,896.935 Z" fill="#333"/><path d="M460,886.935 L470,883.935 L470,901.935 L460,898.935 Z" fill="#2a9fc1"/><rect x="470" y="886.935" width="8" height="12" rx="1" fill="#2a9fc1"/><g fill="#fff"><rect x="472" y="888.935" width="4" height="1.3"/><rect x="472" y="891.935" width="4" height="1.3"/><rect x="472" y="894.935" width="4" height="1.3"/></g><path d="M462.5,889.435 L467.5,896.435 M467.5,889.435 L462.5,896.435" stroke="#fff" stroke-width="1.5"/><path d="M193.0,921.2649999999999 L197.5,925.2649999999999 L193.0,929.2649999999999 Z" fill="#333"/><path d="M461,919.7649999999999 L466.5,919.7649999999999 L468,921.7649999999999 L477,921.7649999999999 L477,930.7649999999999 L461,930.7649999999999 Z" fill="#aadbe9"/><path d="M461,919.7649999999999 L466.5,919.7649999999999 L468,921.4649999999999 L461,921.4649999999999 Z" fill="#62b9d4"/><path d="M193.0,953.5949999999999 L197.5,957.5949999999999 L193.0,961.5949999999999 Z" fill="#333"/><path d="M461,952.0949999999999 L466.5,952.0949999999999 L468,954.0949999999999 L477,954.0949999999999 L477,963.0949999999999 L461,963.0949999999999 Z" fill="#aadbe9"/><path d="M461,952.0949999999999 L466.5,952.0949999999999 L468,953.795 L461,953.795 Z" fill="#62b9d4"/><path d="M193.0,985.925 L197.5,989.925 L193.0,993.925 Z" fill="#333"/><path d="M461,984.425 L466.5,984.425 L468,986.425 L477,986.425 L477,995.425 L461,995.425 Z" fill="#aadbe9"/><path d="M461,984.425 L466.5,984.425 L468,986.125 L461,986.125 Z" fill="#62b9d4"/></svg>
<div class="box" style="left:950.30px;top:263.00px;width:14.00px;height:739.00px;background:#f9f9f9"></div>
<svg style="left:0px;top:0px" width="1000" height="1075" viewBox="0 0 1000 1075"><path d="M952,274.3 L962,274.3 L957,269.5 Z" fill="#777"/><rect x="952" y="283" width="10" height="641" rx="5" fill="#808080"/><path d="M952,989.5 L962,989.5 L957,995 Z" fill="#777"/></svg>
<div class="t" style="left:986.50px;top:141.05px;font-size:21.5px;line-height:30px;color:#333">Overall Report <span style="padding:0 2px 0 1px">|</span> <span style="color:#2a9dc4;font-size:21.9px">b2b_clothes_all.csv</span></div>
<div class="t" style="left:995.50px;top:197.34px;font-size:12px;line-height:17px;color:#2a9fc1;font-weight:700">OVERVIEW</div>
<div class="box" style="left:995.00px;top:215.30px;width:1005.00px;height:1.50px;background:#86c9dc"></div>
<div class="t" style="left:1007.00px;width:300px;text-align:center;top:255.51px;font-size:11.8px;line-height:17px;color:#555"># RECORDS</div>
<div class="t" style="left:1007.00px;width:300px;text-align:center;top:291.22px;font-size:21px;line-height:29px;color:#333">120,308</div>
<div class="t" style="left:1348.50px;width:300px;text-align:center;top:255.51px;font-size:11.8px;line-height:17px;color:#555"># FIELDS</div>
<div class="t" style="left:1348.50px;width:300px;text-align:center;top:291.22px;font-size:21px;line-height:29px;color:#333">11</div>
<div class="t" style="left:1692.00px;width:300px;text-align:center;top:255.51px;font-size:11.8px;line-height:17px;color:#555"># CELLS</div>
<div class="t" style="left:1692.00px;width:300px;text-align:center;top:291.22px;font-size:21px;line-height:29px;color:#333">1,323,388</div>
<div class="box" style="left:1327.50px;top:237.00px;width:1.50px;height:90.00px;background:#e6e6e6"></div>
<div class="box" style="left:1669.50px;top:237.00px;width:1.50px;height:90.00px;background:#e6e6e6"></div>
<div class="box" style="left:995.00px;top:346.20px;width:923.00px;height:21.00px;background:#68b0a4"></div>
<div class="box" style="left:1918.00px;top:346.20px;width:54.00px;height:21.00px;background:#d3646c"></div>
<div class="box" style="left:1972.00px;top:346.20px;width:28.00px;height:21.00px;background:#9276dc"></div>
<div class="box" style="left:1004.50px;top:376.50px;width:6.50px;height:81.50px;background:#68b0a4"></div>
<div class="t" style="left:1020.20px;top:387.04px;font-size:14.6px;line-height:20px;color:#4d4d4d;-webkit-text-stroke:0.4px #4d4d4d">Valid Values</div>
<div class="t m" style="left:1020.20px;top:408.98px;font-size:13.6px;line-height:19px;color:#555">1,230,414</div>
<div class="t m" style="left:1020.20px;top:429.48px;font-size:13.6px;line-height:19px;color:#555">92.97%</div>
<div class="box" style="left:1254.00px;top:376.50px;width:6.50px;height:81.50px;background:#d3646c"></div>
<div class="t" style="left:1269.70px;top:387.04px;font-size:14.6px;line-height:20px;color:#4d4d4d;-webkit-text-stroke:0.4px #4d4d4d">Type Invalidity</div>
<div class="t m" style="left:1269.70px;top:408.98px;font-size:13.6px;line-height:19px;color:#555">71,698</div>
<div class="t m" style="left:1269.70px;top:429.48px;font-size:13.6px;line-height:19px;color:#555">5.42%</div>
<div class="box" style="left:1503.00px;top:376.50px;width:6.50px;height:81.50px;background:#9276dc"></div>
<div class="t" style="left:1518.70px;top:387.04px;font-size:14.6px;line-height:20px;color:#4d4d4d;-webkit-text-stroke:0.4px #4d4d4d">Nature Invalidity</div>
<div class="t m" style="left:1518.70px;top:408.98px;font-size:13.6px;line-height:19px;color:#555">21,276</div>
<div class="t m" style="left:1518.70px;top:429.48px;font-size:13.6px;line-height:19px;color:#555">1.61%</div>
<div class="box" style="left:1752.50px;top:376.50px;width:6.50px;height:81.50px;background:#cccccc"></div>
<div class="t" style="left:1768.20px;top:387.04px;font-size:14.6px;line-height:20px;color:#4d4d4d;-webkit-text-stroke:0.4px #4d4d4d">Missing Values</div>
<div class="t m" style="left:1768.20px;top:408.98px;font-size:13.6px;line-height:19px;color:#555">0</div>
<div class="t m" style="left:1768.20px;top:429.48px;font-size:13.6px;line-height:19px;color:#555">0.00%</div>
<div class="t" style="left:986.30px;top:486.31px;font-size:11.8px;line-height:17px;color:#2a9fc1;font-weight:700">ANOMALIES AND STATISTICS PER FIELD</div>
<div class="box" style="left:986.00px;top:505.30px;width:1014.00px;height:1.50px;background:#86c9dc"></div>
<div class="box" style="left:986.00px;top:539.50px;width:1014.00px;height:1.50px;background:#e6e6e6"></div>
<div class="box" style="left:986.00px;top:538.10px;width:90.60px;height:3.00px;background:#45acca;border-radius:1.5px"></div>
<svg style="left:0px;top:0px" width="1200" height="560" viewBox="0 0 1200 560"><path d="M995.2,522 L1001.5,532.2 L988.9,532.2 Z" fill="#2a9fc1"/><rect x="994.5" y="525.5" width="1.4" height="3.3" fill="#fff"/><rect x="994.5" y="529.6" width="1.4" height="1.3" fill="#fff"/>
<g fill="none" stroke="#555" stroke-width="1.3"><path d="M1096,527 C1098,524 1100,524 1102,527 C1103,529 1105,528 1108,521"/></g><g fill="#555"><rect x="1097" y="529.5" width="1.5" height="3"/><rect x="1100" y="528" width="1.5" height="4.5"/><rect x="1103" y="530" width="1.5" height="2.5"/><rect x="1095" y="532" width="12" height="1"/></g></svg>
<div class="t" style="left:1010.00px;top:517.93px;font-size:13.2px;line-height:18px;color:#2ea3c5;-webkit-text-stroke:0.25px #2ea3c5">Anomalies</div>
<div class="t" style="left:1116.00px;top:517.93px;font-size:13.2px;line-height:18px;color:#555">Statistics</div>
<div class="box" style="left:985.80px;top:551.00px;width:1013.80px;height:449.80px;background:#f9f9f9;border:1px solid #dcdcdc"></div>
<div class="box" style="left:986.80px;top:552.00px;width:1011.80px;height:31.90px;background:linear-gradient(#f9f9f9,#ececec);border-bottom:1px solid #dcdcdc"></div>
<div class="box" style="left:986.80px;top:583.70px;width:1011.80px;height:32.33px;background:#ffffff"></div>
<div class="t" style="left:999.00px;top:589.59px;font-size:13.3px;line-height:19px;color:#555">Amount (REAL)</div>
<div class="box" style="left:1352.50px;top:588.90px;width:109.80px;height:20.50px;background:#68b0a4"></div>
<div class="t m" style="right:406.00px;text-align:right;top:591.37px;font-size:12.5px;line-height:18px;color:#555">0</div>
<div class="t m" style="right:274.00px;text-align:right;top:591.37px;font-size:12.5px;line-height:18px;color:#555">0</div>
<div class="t m" style="right:142.00px;text-align:right;top:591.37px;font-size:12.5px;line-height:18px;color:#555">0</div>
<div class="t m" style="right:11.00px;text-align:right;top:591.37px;font-size:12.5px;line-height:18px;color:#6ab8a8">120 308</div>
<div class="box" style="left:986.80px;top:616.03px;width:1011.80px;height:32.33px;background:#f4f4f4"></div>
<div class="t" style="left:999.00px;top:621.92px;font-size:13.3px;line-height:19px;color:#555">Complaints (VARCHAR)</div>
<div class="box" style="left:1352.50px;top:621.23px;width:109.80px;height:20.50px;background:#68b0a4"></div>
<div class="t m" style="right:406.00px;text-align:right;top:623.70px;font-size:12.5px;line-height:18px;color:#555">0</div>
<div class="t m" style="right:274.00px;text-align:right;top:623.70px;font-size:12.5px;line-height:18px;color:#555">0</div>
<div class="t m" style="right:142.00px;text-align:right;top:623.70px;font-size:12.5px;line-height:18px;color:#555">0</div>
<div class="t m" style="right:11.00px;text-align:right;top:623.70px;font-size:12.5px;line-height:18px;color:#6ab8a8">120 308</div>
<div class="box" style="left:986.80px;top:648.36px;width:1011.80px;height:32.33px;background:#ffffff"></div>
<div class="t" style="left:999.00px;top:654.25px;font-size:13.3px;line-height:19px;color:#555">Order Date (TIMESTAMP)</div>
<div class="box" style="left:1352.50px;top:653.56px;width:77.08px;height:20.50px;background:#68b0a4"></div>
<div class="box" style="left:1429.58px;top:653.56px;width:32.72px;height:20.50px;background:#d3646c"></div>
<div class="t m" style="right:406.00px;text-align:right;top:656.03px;font-size:12.5px;line-height:18px;color:#555">0</div>
<div class="t m" style="right:274.00px;text-align:right;top:656.03px;font-size:12.5px;line-height:18px;color:#d3646c">35 849</div>
<div class="t m" style="right:142.00px;text-align:right;top:656.03px;font-size:12.5px;line-height:18px;color:#555">0</div>
<div class="t m" style="right:11.00px;text-align:right;top:656.03px;font-size:12.5px;line-height:18px;color:#6ab8a8">84 459</div>
<div class="box" style="left:986.80px;top:680.69px;width:1011.80px;height:32.33px;background:#f4f4f4"></div>
<div class="t" style="left:999.00px;top:686.58px;font-size:13.3px;line-height:19px;color:#555">Product Category (VARCHAR)</div>
<div class="box" style="left:1352.50px;top:685.89px;width:109.80px;height:20.50px;background:#68b0a4"></div>
<div class="t m" style="right:406.00px;text-align:right;top:688.36px;font-size:12.5px;line-height:18px;color:#555">0</div>
<div class="t m" style="right:274.00px;text-align:right;top:688.36px;font-size:12.5px;line-height:18px;color:#555">0</div>
<div class="t m" style="right:142.00px;text-align:right;top:688.36px;font-size:12.5px;line-height:18px;color:#555">0</div>
<div class="t m" style="right:11.00px;text-align:right;top:688.36px;font-size:12.5px;line-height:18px;color:#6ab8a8">120 308</div>
<div class="box" style="left:986.80px;top:713.02px;width:1011.80px;height:32.33px;background:#ffffff"></div>
<div class="t" style="left:999.00px;top:718.91px;font-size:13.3px;line-height:19px;color:#555">Product Sub-Category (VARCHAR)</div>
<div class="box" style="left:1352.50px;top:718.22px;width:109.80px;height:20.50px;background:#68b0a4"></div>
<div class="t m" style="right:406.00px;text-align:right;top:720.69px;font-size:12.5px;line-height:18px;color:#555">0</div>
<div class="t m" style="right:274.00px;text-align:right;top:720.69px;font-size:12.5px;line-height:18px;color:#555">0</div>
<div class="t m" style="right:142.00px;text-align:right;top:720.69px;font-size:12.5px;line-height:18px;color:#555">0</div>
<div class="t m" style="right:11.00px;text-align:right;top:720.69px;font-size:12.5px;line-height:18px;color:#6ab8a8">120 308</div>
<div class="box" style="left:986.80px;top:745.35px;width:1011.80px;height:32.33px;background:#f4f4f4"></div>
<div class="t" style="left:999.00px;top:751.24px;font-size:13.3px;line-height:19px;color:#555">Quantity (BIGINT)</div>
<div class="box" style="left:1352.50px;top:750.55px;width:109.80px;height:20.50px;background:#68b0a4"></div>
<div class="t m" style="right:406.00px;text-align:right;top:753.02px;font-size:12.5px;line-height:18px;color:#555">0</div>
<div class="t m" style="right:274.00px;text-align:right;top:753.02px;font-size:12.5px;line-height:18px;color:#555">0</div>
<div class="t m" style="right:142.00px;text-align:right;top:753.02px;font-size:12.5px;line-height:18px;color:#555">0</div>
<div class="t m" style="right:11.00px;text-align:right;top:753.02px;font-size:12.5px;line-height:18px;color:#6ab8a8">120 308</div>
<div class="box" style="left:986.80px;top:777.68px;width:1011.80px;height:32.33px;background:#ffffff"></div>
<div class="t" style="left:999.00px;top:783.57px;font-size:13.3px;line-height:19px;color:#555">Sales Representative (VARCHAR)</div>
<div class="box" style="left:1352.50px;top:782.88px;width:90.38px;height:20.50px;background:#68b0a4"></div>
<div class="box" style="left:1442.88px;top:782.88px;width:19.42px;height:20.50px;background:#9276dc"></div>
<div class="t m" style="right:406.00px;text-align:right;top:785.35px;font-size:12.5px;line-height:18px;color:#555">0</div>
<div class="t m" style="right:274.00px;text-align:right;top:785.35px;font-size:12.5px;line-height:18px;color:#555">0</div>
<div class="t m" style="right:142.00px;text-align:right;top:785.35px;font-size:12.5px;line-height:18px;color:#9276dc">21 276</div>
<div class="t m" style="right:11.00px;text-align:right;top:785.35px;font-size:12.5px;line-height:18px;color:#6ab8a8">99 032</div>
<div class="box" style="left:986.80px;top:810.01px;width:1011.80px;height:32.33px;background:#f4f4f4"></div>
<div class="t" style="left:999.00px;top:815.90px;font-size:13.3px;line-height:19px;color:#555">Ship Date (TIMESTAMP)</div>
<div class="box" style="left:1352.50px;top:815.21px;width:77.08px;height:20.50px;background:#68b0a4"></div>
<div class="box" style="left:1429.58px;top:815.21px;width:32.72px;height:20.50px;background:#d3646c"></div>
<div class="t m" style="right:406.00px;text-align:right;top:817.68px;font-size:12.5px;line-height:18px;color:#555">0</div>
<div class="t m" style="right:274.00px;text-align:right;top:817.68px;font-size:12.5px;line-height:18px;color:#d3646c">35 849</div>
<div class="t m" style="right:142.00px;text-align:right;top:817.68px;font-size:12.5px;line-height:18px;color:#555">0</div>
<div class="t m" style="right:11.00px;text-align:right;top:817.68px;font-size:12.5px;line-height:18px;color:#6ab8a8">84 459</div>
<div class="box" style="left:986.80px;top:842.34px;width:1011.80px;height:32.33px;background:#ffffff"></div>
<div class="t" style="left:999.00px;top:848.23px;font-size:13.3px;line-height:19px;color:#555">Ship Mode (VARCHAR)</div>
<div class="box" style="left:1352.50px;top:847.54px;width:109.80px;height:20.50px;background:#68b0a4"></div>
<div class="t m" style="right:406.00px;text-align:right;top:850.01px;font-size:12.5px;line-height:18px;color:#555">0</div>
<div class="t m" style="right:274.00px;text-align:right;top:850.01px;font-size:12.5px;line-height:18px;color:#555">0</div>
<div class="t m" style="right:142.00px;text-align:right;top:850.01px;font-size:12.5px;line-height:18px;color:#555">0</div>
<div class="t m" style="right:11.00px;text-align:right;top:850.01px;font-size:12.5px;line-height:18px;color:#6ab8a8">120 308</div>
<div class="box" style="left:986.80px;top:874.67px;width:1011.80px;height:32.33px;background:#f4f4f4"></div>
<div class="t" style="left:999.00px;top:880.56px;font-size:13.3px;line-height:19px;color:#555">State (VARCHAR)</div>
<div class="box" style="left:1352.50px;top:879.87px;width:109.80px;height:20.50px;background:#68b0a4"></div>
<div class="t m" style="right:406.00px;text-align:right;top:882.34px;font-size:12.5px;line-height:18px;color:#555">0</div>
<div class="t m" style="right:274.00px;text-align:right;top:882.34px;font-size:12.5px;line-height:18px;color:#555">0</div>
<div class="t m" style="right:142.00px;text-align:right;top:882.34px;font-size:12.5px;line-height:18px;color:#555">0</div>
<div class="t m" style="right:11.00px;text-align:right;top:882.34px;font-size:12.5px;line-height:18px;color:#6ab8a8">120 308</div>
<div class="box" style="left:986.80px;top:907.00px;width:1011.80px;height:32.33px;background:#ffffff"></div>
<div class="t" style="left:999.00px;top:912.89px;font-size:13.3px;line-height:19px;color:#555">Store (VARCHAR)</div>
<div class="box" style="left:1352.50px;top:912.20px;width:109.80px;height:20.50px;background:#68b0a4"></div>
<div class="t m" style="right:406.00px;text-align:right;top:914.67px;font-size:12.5px;line-height:18px;color:#555">0</div>
<div class="t m" style="right:274.00px;text-align:right;top:914.67px;font-size:12.5px;line-height:18px;color:#555">0</div>
<div class="t m" style="right:142.00px;text-align:right;top:914.67px;font-size:12.5px;line-height:18px;color:#555">0</div>
<div class="t m" style="right:11.00px;text-align:right;top:914.67px;font-size:12.5px;line-height:18px;color:#6ab8a8">120 308</div>
<div class="box" style="left:986.80px;top:938.83px;width:1011.80px;height:1.00px;background:#dcdcdc"></div>
<div class="box" style="left:986.80px;top:967.30px;width:1011.80px;height:32.50px;background:linear-gradient(#f9f9f9,#ececec);border-top:1px solid #dcdcdc"></div>
<div class="box" style="left:1341.10px;top:552.00px;width:1.00px;height:387.33px;background:#e2e2e2"></div>
<div class="box" style="left:1341.10px;top:967.30px;width:1.00px;height:32.50px;background:#dcdcdc"></div>
<div class="box" style="left:1473.00px;top:552.00px;width:1.00px;height:387.33px;background:#e2e2e2"></div>
<div class="box" style="left:1473.00px;top:967.30px;width:1.00px;height:32.50px;background:#dcdcdc"></div>
<div class="box" style="left:1604.70px;top:552.00px;width:1.00px;height:387.33px;background:#e2e2e2"></div>
<div class="box" style="left:1604.70px;top:967.30px;width:1.00px;height:32.50px;background:#dcdcdc"></div>
<div class="box" style="left:1736.90px;top:552.00px;width:1.00px;height:387.33px;background:#e2e2e2"></div>
<div class="box" style="left:1736.90px;top:967.30px;width:1.00px;height:32.50px;background:#dcdcdc"></div>
<div class="box" style="left:1867.90px;top:552.00px;width:1.00px;height:387.33px;background:#e2e2e2"></div>
<div class="box" style="left:1867.90px;top:967.30px;width:1.00px;height:32.50px;background:#dcdcdc"></div>
<div class="t" style="left:999.00px;top:560.41px;font-size:12.1px;line-height:17px;color:#4f4f4f;-webkit-text-stroke:0.35px #4f4f4f">Field Name</div>
<div class="t" style="left:1339.50px;width:130px;text-align:center;top:560.41px;font-size:12.1px;line-height:17px;color:#4f4f4f;-webkit-text-stroke:0.35px #4f4f4f">Quality</div>
<div class="t" style="right:406.80px;text-align:right;top:560.41px;font-size:12.1px;line-height:17px;color:#4f4f4f;-webkit-text-stroke:0.35px #4f4f4f">Missing Values</div>
<div class="t" style="right:274.50px;text-align:right;top:560.41px;font-size:12.1px;line-height:17px;color:#4f4f4f;-webkit-text-stroke:0.35px #4f4f4f">Type Invalidity</div>
<div class="t" style="right:142.50px;text-align:right;top:560.41px;font-size:12.1px;line-height:17px;color:#4f4f4f;-webkit-text-stroke:0.35px #4f4f4f">Nature Invalidity</div>
<div class="t" style="right:11.50px;text-align:right;top:560.41px;font-size:12.1px;line-height:17px;color:#4f4f4f;-webkit-text-stroke:0.35px #4f4f4f">Valid Values</div>
<div class="t m" style="right:406.00px;text-align:right;top:975.17px;font-size:12.5px;line-height:18px;color:#444">0</div>
<div class="t m" style="right:274.00px;text-align:right;top:975.17px;font-size:12.5px;line-height:18px;color:#444">71,698</div>
<div class="t m" style="right:142.00px;text-align:right;top:975.17px;font-size:12.5px;line-height:18px;color:#444">21,276</div>
<div class="t m" style="right:11.00px;text-align:right;top:975.17px;font-size:12.5px;line-height:18px;color:#444">1,230,414</div>
</body></html>
